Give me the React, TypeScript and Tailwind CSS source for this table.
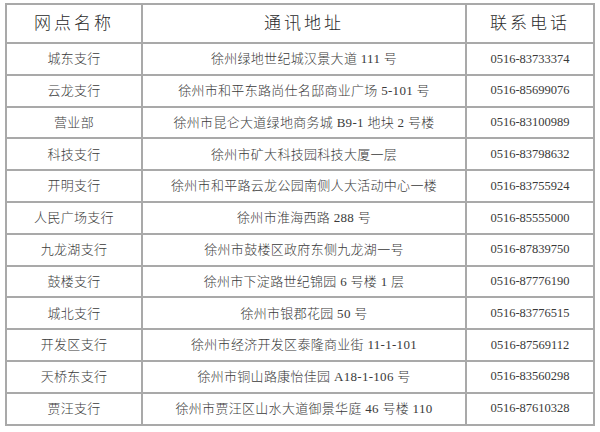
import React from "react";

const rows: [string, string, string][] = [
  ["城东支行", "徐州绿地世纪城汉景大道 111 号", "0516-83733374"],
  ["云龙支行", "徐州市和平东路尚仕名邸商业广场 5-101 号", "0516-85699076"],
  ["营业部", "徐州市昆仑大道绿地商务城 B9-1 地块 2 号楼", "0516-83100989"],
  ["科技支行", "徐州市矿大科技园科技大厦一层", "0516-83798632"],
  ["开明支行", "徐州市和平路云龙公园南侧人大活动中心一楼", "0516-83755924"],
  ["人民广场支行", "徐州市淮海西路 288 号", "0516-85555000"],
  ["九龙湖支行", "徐州市鼓楼区政府东侧九龙湖一号", "0516-87839750"],
  ["鼓楼支行", "徐州市下淀路世纪锦园 6 号楼 1 层", "0516-87776190"],
  ["城北支行", "徐州市银郡花园 50 号", "0516-83776515"],
  ["开发区支行", "徐州市经济开发区泰隆商业街 11-1-101", "0516-87569112"],
  ["天桥东支行", "徐州市铜山路康怡佳园 A18-1-106 号", "0516-83560298"],
  ["贾汪支行", "徐州市贾汪区山水大道御景华庭 46 号楼 110", "0516-87610328"],
];

const font = {
  fontFamily: '"Liberation Serif", "Noto Sans CJK SC", serif',
};

export default function App() {
  return (
    <div className="w-[600px] h-[432px] bg-white pt-[3px] pl-[5px]" style={font}>
      <div className="grid grid-cols-[136px_324px_128px] border-l-2 border-t-2 border-[#a9a9a9] w-[590px]">
        {["网点名称", "通讯地址", "联系电话"].map((h) => (
          <div
            key={h}
            className="h-[39px] flex items-center justify-center border-r-2 border-b-2 border-[#a9a9a9] text-[17px] font-light tracking-[3px] text-[#2a2a2a]"
          >
            {h}
          </div>
        ))}
        {rows.map((r) =>
          r.map((c, i) => (
            <div
              key={r[0] + i}
              className={
                "h-[31.8px] flex items-center justify-center border-r-2 border-b-2 border-[#a9a9a9] font-light text-[#3a3a3a] " +
                (i === 2 ? "text-[12.5px]" : "text-[13px] tracking-[0.3px]")
              }
            >
              {c}
            </div>
          ))
        )}
      </div>
    </div>
  );
}
